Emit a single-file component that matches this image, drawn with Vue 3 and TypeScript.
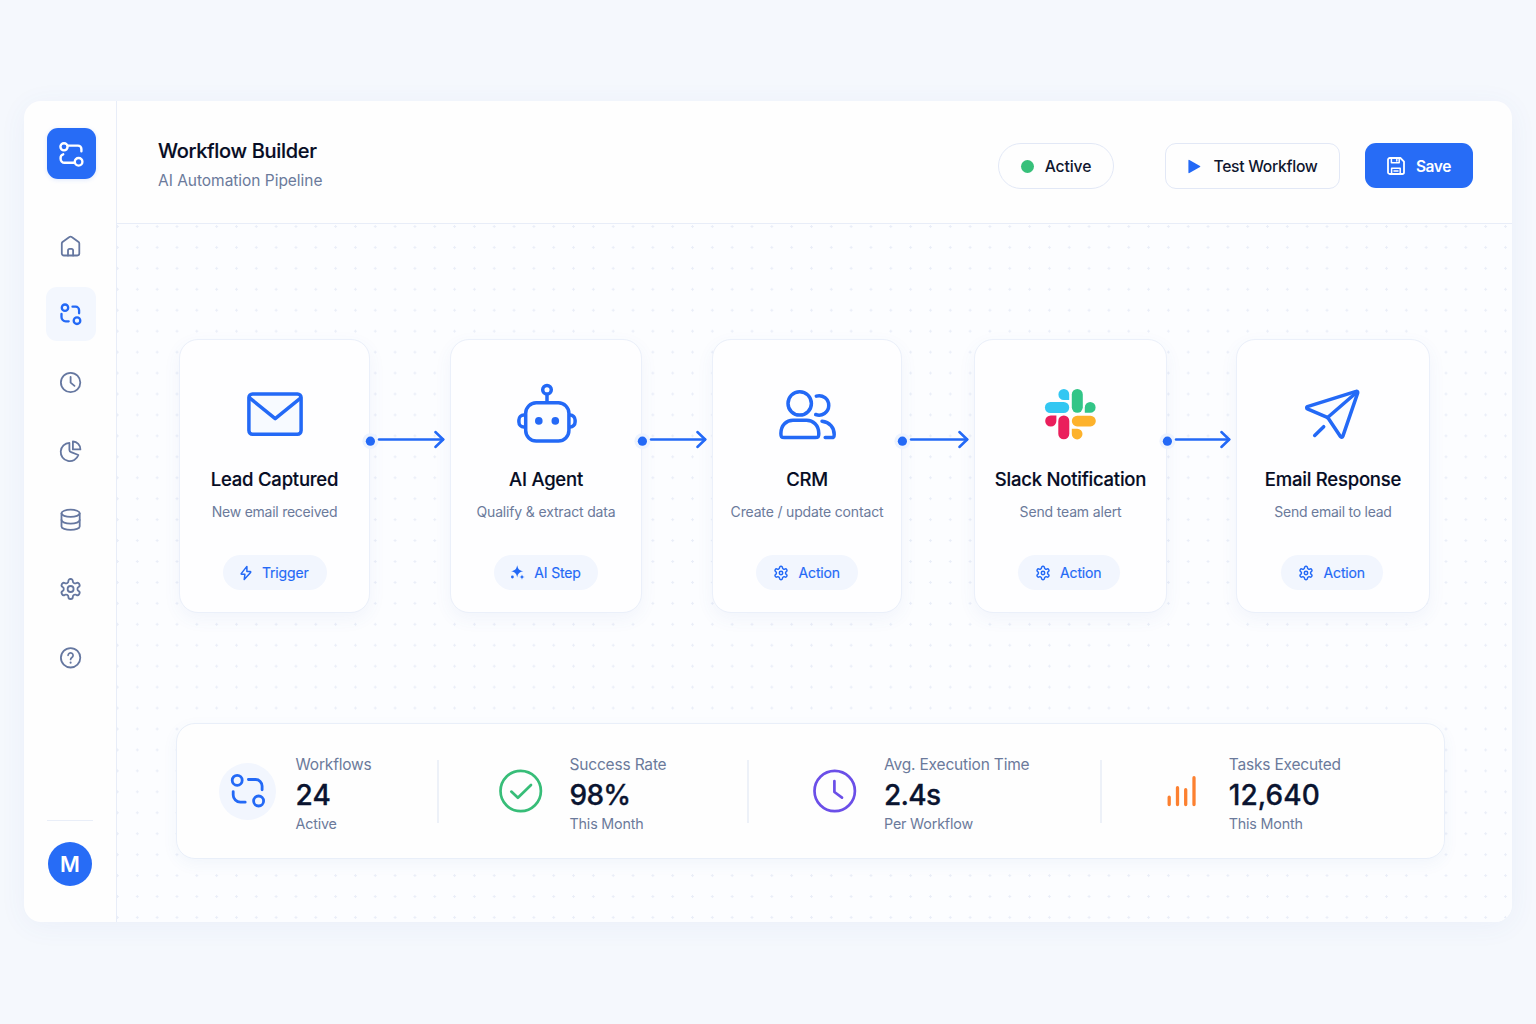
<script setup lang="ts">
type IconName = 'mail' | 'robot' | 'users' | 'slack' | 'plane'
type TagKind = 'trigger' | 'ai' | 'action'

interface Step {
  id: string
  icon: IconName
  title: string
  text: string
  tag: string
  kind: TagKind
  /** width of the connector that leaves the card; 0 for the last card */
  link: number
}

interface Stat {
  id: string
  label: string
  value: string
  note: string
}

const navItems = ['home', 'flows', 'history', 'reports', 'data', 'settings', 'help'] as const
const activeNav = 'flows'

const steps: Step[] = [
  { id: 'lead', icon: 'mail', title: 'Lead Captured', text: 'New email received', tag: 'Trigger', kind: 'trigger', link: 80 },
  { id: 'agent', icon: 'robot', title: 'AI Agent', text: 'Qualify & extract data', tag: 'AI Step', kind: 'ai', link: 70 },
  { id: 'crm', icon: 'users', title: 'CRM', text: 'Create / update contact', tag: 'Action', kind: 'action', link: 72 },
  { id: 'slack', icon: 'slack', title: 'Slack Notification', text: 'Send team alert', tag: 'Action', kind: 'action', link: 69 },
  { id: 'email', icon: 'plane', title: 'Email Response', text: 'Send email to lead', tag: 'Action', kind: 'action', link: 0 },
]

const stats: Stat[] = [
  { id: 'workflows', label: 'Workflows', value: '24', note: 'Active' },
  { id: 'success', label: 'Success Rate', value: '98%', note: 'This Month' },
  { id: 'time', label: 'Avg. Execution Time', value: '2.4s', note: 'Per Workflow' },
  { id: 'tasks', label: 'Tasks Executed', value: '12,640', note: 'This Month' },
]

const gear =
  'M12.22 2h-.44a2 2 0 0 0-2 2v.18a2 2 0 0 1-1 1.73l-.43.25a2 2 0 0 1-2 0l-.15-.08a2 2 0 0 0-2.73.73l-.22.38a2 2 0 0 0 .73 2.73l.15.1a2 2 0 0 1 1 1.72v.51a2 2 0 0 1-1 1.74l-.15.09a2 2 0 0 0-.73 2.73l.22.38a2 2 0 0 0 2.73.73l.15-.08a2 2 0 0 1 2 0l.43.25a2 2 0 0 1 1 1.73V20a2 2 0 0 0 2 2h.44a2 2 0 0 0 2-2v-.18a2 2 0 0 1 1-1.73l.43-.25a2 2 0 0 1 2 0l.15.08a2 2 0 0 0 2.73-.73l.22-.39a2 2 0 0 0-.73-2.73l-.15-.08a2 2 0 0 1-1-1.74v-.5a2 2 0 0 1 1-1.74l.15-.09a2 2 0 0 0 .73-2.73l-.22-.38a2 2 0 0 0-2.73-.73l-.15.08a2 2 0 0 1-2 0l-.43-.25a2 2 0 0 1-1-1.73V4a2 2 0 0 0-2-2z'
</script>

<template>
  <div class="page">
    <div class="app">
      <aside class="sidebar">
        <div class="logo">
          <svg width="28" height="28" viewBox="0 0 28 28" class="line" stroke-width="2.4">
            <circle cx="7" cy="6.8" r="3.6" />
            <path d="M10.8 5.6H21a3.4 3.4 0 0 1 3.4 3.4v2.3" />
            <path d="M6.2 14.3a3.6 3.6 0 0 0-2.6 3.5v.9a4 4 0 0 0 4 4h9.8" />
            <circle cx="21.6" cy="21.8" r="3.8" />
          </svg>
        </div>

        <nav class="nav">
          <a v-for="item in navItems" :key="item" class="nav-item" :class="{ active: item === activeNav }">
            <svg width="24" height="24" viewBox="0 0 24 24" class="line" :stroke-width="item === activeNav ? 2.3 : 1.8">
              <template v-if="item === 'home'">
                <path d="M2.800 9.500c0-.6.3-1.100.7-1.500l6.900-5a1.900 1.900 0 0 1 2.300 0l6.900 5c.5.4.7.9.7 1.500v10a2 2 0 0 1-2 2H4.800a2 2 0 0 1-2-2z" />
                <path d="M9 21.500v-5a1.600 1.600 0 0 1 1.600-1.600h1.900a1.600 1.600 0 0 1 1.600 1.600v5" />
              </template>
              <template v-else-if="item === 'flows'">
                <circle cx="6" cy="5.700" r="3.200" />
                <path d="M13.500 4.700h3.100a3.500 3.500 0 0 1 3.500 3.500v3.100" />
                <path d="M2.500 11.900V15a4.200 4.200 0 0 0 4.200 4.300h3" />
                <circle cx="18" cy="18.700" r="3.300" />
              </template>
              <template v-else-if="item === 'history'">
                <circle cx="11.600" cy="11.500" r="9.700" />
                <path d="M11.600 5.900v5.700l3.900 3.300" />
              </template>
              <g v-else-if="item === 'reports'" transform="translate(-.2 -.8)">
                <path d="M14.100 2.300v7.900h7.500a7.800 7.800 0 0 0-7.500-7.900z" />
                <path d="M10.600 3.700a9.100 9.100 0 1 0 9 12.100l-7.300-2.900a2.400 2.400 0 0 1-1.700-2.200z" />
              </g>
              <template v-else-if="item === 'data'">
                <ellipse cx="11.600" cy="5.300" rx="9.100" ry="3.600" />
                <path d="M2.500 5.300v13.100c0 2 4.100 3.500 9.100 3.500s9.100-1.500 9.100-3.500V5.300" />
                <path d="M2.500 12c0 2 4.100 3.600 9.100 3.600s9.100-1.600 9.100-3.600" />
              </template>
              <g v-else-if="item === 'settings'" transform="translate(-.4 0)">
                <path :d="gear" />
                <circle cx="12" cy="12" r="3" />
              </g>
              <template v-else>
                <circle cx="11.600" cy="11.800" r="9.700" />
                <path d="M9.100 9.300a2.500 2.500 0 1 1 3.800 2.200c-.9.600-1.300 1-1.300 2" stroke-width="1.700" />
                <path d="M11.600 16.600v.1" stroke-width="2" />
              </template>
            </svg>
          </a>
        </nav>

        <div class="account">
          <div class="avatar">M</div>
        </div>
      </aside>

      <div class="main">
        <header class="topbar">
          <div class="heading">
            <h1>Workflow Builder</h1>
            <p>AI Automation Pipeline</p>
          </div>
          <div class="actions">
            <div class="status"><i class="status-dot"></i><span>Active</span></div>
            <button class="btn test">
              <svg width="13" height="15" viewBox="0 0 13 15">
                <path d="M1.4.9 12 7a.6.6 0 0 1 0 1L1.4 14.1a.7.7 0 0 1-1-.6V1.5a.7.7 0 0 1 1-.6z" fill="#2369f6" />
              </svg>
              <span>Test Workflow</span>
            </button>
            <button class="btn save">
              <svg width="18" height="18" viewBox="0 0 18 18" class="line" stroke-width="1.8">
                <path d="M2.800 1h10.600L17 4.600v10.600a1.800 1.800 0 0 1-1.800 1.800H2.800A1.800 1.800 0 0 1 1 15.200V2.800A1.800 1.800 0 0 1 2.800 1z" />
                <path d="M4.400 1.200v4.600h7.800V1.200M4.600 16.800v-5.600h8.600v5.600M9.800 2.600v1.400M7 14h4" stroke-width="1.500" />
              </svg>
              <span>Save</span>
            </button>
          </div>
        </header>

        <section class="canvas">
          <div class="flow">
            <template v-for="step in steps" :key="step.id">
              <article class="card" :class="step.id">
                <svg class="card-icon line" width="64" height="64" viewBox="0 0 64 64" stroke-width="3.500">
                  <template v-if="step.icon === 'mail'">
                    <rect x="5.900" y="12" width="52.200" height="40.200" rx="3.600" fill="#f7faff" />
                    <path d="m7.200 16.400 25 20.200 25-20.200" />
                  </template>
                  <template v-else-if="step.icon === 'robot'">
                    <circle cx="33" cy="7.700" r="4.300" />
                    <path d="M33 12.500v7.500M11.200 33h-1.300a5 5 0 0 0-5 5v2a5 5 0 0 0 5 5h1.300M54.800 33h1.300a5 5 0 0 1 5 5v2a5 5 0 0 1-5 5h-1.300" />
                    <rect x="11.700" y="20.800" width="43.200" height="38.300" rx="10.500" fill="#fbfdff" />
                    <circle cx="24.800" cy="38.900" r="3.800" class="solid" />
                    <circle cx="41.300" cy="38.900" r="3.800" class="solid" />
                  </template>
                  <template v-else-if="step.icon === 'users'">
                    <circle cx="24.700" cy="21.400" r="11.700" />
                    <path d="M5.900 51.500C5.900 43 11.400 38.200 18 38.200h13.500c6.600 0 12.300 4.800 12.300 13.300 0 3.600-.6 4.100-3.400 4.100H9.300c-2.800 0-3.400-.5-3.400-4.100z" />
                    <path d="M41.300 14.100a9.700 9.700 0 1 1-.6 18.400" />
                    <path d="M47 39.200c7.800.9 12.200 6.400 12.200 13.200 0 2.400-.5 3.200-2.600 3.200h-6.400" />
                  </template>
                  <g v-else-if="step.icon === 'slack'" stroke="none" transform="translate(-.6 0)">
                    <g fill="#33c7f2">
                      <rect x="6.500" y="20" width="24.300" height="11" rx="5.500" />
                      <path d="M25.500 7a5.300 5.300 0 0 1 5.300 5.300V18h-5.300a5.500 5.500 0 0 1 0-11z" />
                    </g>
                    <g fill="#32c587">
                      <rect x="33.400" y="7" width="11" height="23.800" rx="5.500" />
                      <path d="M46.400 30.800v-5.400a5.400 5.400 0 1 1 5.400 5.400z" />
                    </g>
                    <g fill="#ea1f5c">
                      <path d="M18 33.400V39a5.600 5.600 0 1 1-5.600-5.600z" />
                      <rect x="19.900" y="33.400" width="11" height="23.900" rx="5.500" />
                    </g>
                    <g fill="#fdb22c">
                      <rect x="33.400" y="33.700" width="24" height="10.700" rx="5.350" />
                      <path d="M33.400 46.700h5.400a5.350 5.350 0 1 1-5.400 5.300z" />
                    </g>
                  </g>
                  <g v-else transform="translate(-.2 0)">
                    <path d="M6.600 24.700a1.200 1.200 0 0 0 0 2.200l19.300 8.300c.9.400 1.400.8 1.900 1.500l12 18a1.200 1.200 0 0 0 2.200-.3L56.900 10.900a1.200 1.200 0 0 0-1.600-1.500z" fill="#fbfdff" />
                    <path d="M56 10.200 26.800 35.500M13.900 53.500l9-8.800" />
                  </g>
                </svg>
                <h2>{{ step.title }}</h2>
                <p>{{ step.text }}</p>
                <div class="tag" :class="step.kind">
                  <svg v-if="step.kind === 'trigger'" width="12" height="16" viewBox="0 0 12 16" class="line" stroke-width="1.500">
                    <path d="M6.900 1.400 1.200 8.600c-.2.300 0 .7.300.7h3.400l-.7 5.200 6.400-7.100c.3-.3.100-.8-.3-.8H6.900z" />
                  </svg>
                  <svg v-else-if="step.kind === 'ai'" width="15" height="15" viewBox="0 0 15 15" fill="currentColor">
                    <path d="M7.200.3C8 4.200 9.200 5.400 13.400 6.300 9.200 7.200 8 8.400 7.200 12.400 6.400 8.400 5.200 7.200 1 6.300 5.200 5.400 6.400 4.200 7.200.3z" />
                    <path d="M12 9.500c.4 1.700.9 2.200 2.700 2.600-1.800.4-2.300.9-2.700 2.700-.4-1.800-.9-2.300-2.700-2.700 1.800-.4 2.300-.9 2.700-2.600z" />
                    <circle cx="2.400" cy="12" r="1.400" />
                  </svg>
                  <svg v-else width="16" height="16" viewBox="0 0 24 24" class="line" stroke-width="2.200">
                    <path :d="gear" />
                    <circle cx="12" cy="12" r="2.600" />
                  </svg>
                  <span>{{ step.tag }}</span>
                </div>
              </article>
              <svg v-if="step.link" class="link line" :width="step.link" height="24" :viewBox="`0 0 ${step.link} 24`">
                <circle cx=".4" cy="14.200" r="8" fill="#edf3fe" stroke="none" />
                <circle cx=".4" cy="14.200" r="4.600" fill="#2369f6" stroke="none" />
                <path :d="`M9 12.500H${step.link - 6.800}`" stroke-width="2.400" />
                <path :d="`M${step.link - 14.600} 5l7.800 7.500-7.800 7.500`" stroke-width="2.500" />
              </svg>
            </template>
          </div>

          <div class="stats">
            <div v-for="stat in stats" :key="stat.id" class="stat" :class="stat.id">
              <div class="stat-icon">
                <svg v-if="stat.id === 'workflows'" width="40" height="40" viewBox="0 0 40 40" class="line" stroke-width="2.800">
                  <circle cx="9.200" cy="9.300" r="5" />
                  <path d="M20.400 8.500h7.200a6.500 6.500 0 0 1 6.500 6.500v3.800" />
                  <path d="M5.200 20.600V24a7.200 7.200 0 0 0 7.200 7.200h4.800" />
                  <circle cx="30.600" cy="30" r="5" />
                </svg>
                <svg v-else-if="stat.id === 'success'" width="44" height="44" viewBox="0 0 44 44" class="line" stroke-width="2.700">
                  <circle cx="21.700" cy="22" r="20.200" />
                  <path d="m12.300 22.600 6.600 6.200L32 16" />
                </svg>
                <svg v-else-if="stat.id === 'time'" width="44" height="44" viewBox="0 0 44 44" class="line" stroke-width="2.700">
                  <circle cx="21.700" cy="22" r="20.200" />
                  <path d="M21.400 12v11l7.600 5.600" />
                </svg>
                <svg v-else width="32" height="34" viewBox="0 0 32 34" class="line" stroke-width="3.300">
                  <path d="M3.200 23.200v7.400M11.500 13.700v16.900M19.700 15.700v14.900M28 3.700v26.900" />
                </svg>
              </div>
              <div class="stat-text">
                <span class="label">{{ stat.label }}</span>
                <strong>{{ stat.value }}</strong>
                <span class="note">{{ stat.note }}</span>
              </div>
            </div>
          </div>
        </section>
      </div>
    </div>
  </div>
</template>

<style>
body {
  background: #f5f8fd;
}
</style>

<style scoped>
.page {
  box-sizing: border-box;
  width: 1536px;
  height: 1024px;
  padding: 101px 24px 102px;
  background: #f5f8fd;
  font-family: Inter, 'Liberation Sans', sans-serif;
  color: #0a1029;
  overflow: hidden;
}

.app {
  display: flex;
  height: 821px;
  border-radius: 17px;
  background: #fefefe;
  overflow: hidden;
  box-shadow: 0 4px 28px rgba(60, 105, 190, 0.06);
}

.line {
  fill: none;
  stroke: currentColor;
  stroke-linecap: round;
  stroke-linejoin: round;
}

.solid {
  fill: currentColor;
  stroke: none;
}

.sidebar {
  box-sizing: border-box;
  width: 93px;
  flex: none;
  display: flex;
  flex-direction: column;
  align-items: center;
  padding: 27px 0 36px;
  border-right: 1px solid #e8edf8;
}

.logo {
  width: 49px;
  height: 51px;
  margin-left: 2px;
  border-radius: 11px;
  background: #276cf6;
  color: #fff;
  display: flex;
  align-items: center;
  justify-content: center;
  box-shadow: 0 1px 4px rgba(39, 108, 246, 0.15);
}

.nav {
  display: flex;
  flex-direction: column;
  gap: 14.700px;
  margin-top: 39.600px;
}

.nav-item {
  box-sizing: border-box;
  width: 50px;
  height: 54px;
  margin-left: 1px;
  border-radius: 11px;
  color: #6577a0;
  display: flex;
  align-items: center;
  justify-content: center;
}

.nav-item.active {
  background: #f3f7fe;
  color: #2369f6;
}

.account {
  margin-top: auto;
  padding-top: 21px;
  width: 46px;
  border-top: 1px solid #e9eef8;
  display: flex;
  justify-content: center;
}

.avatar {
  width: 44px;
  height: 44px;
  border-radius: 50%;
  background: #276cf6;
  color: #fff;
  font-size: 21.500px;
  font-weight: 600;
  line-height: 44px;
  text-align: center;
}

.main {
  flex: 1;
  display: flex;
  flex-direction: column;
}

.topbar {
  box-sizing: border-box;
  height: 123px;
  padding: 0 39px 0 41px;
  display: flex;
  justify-content: space-between;
  border-bottom: 1px solid #e8edf8;
}

.heading {
  padding-top: 36px;
}

h1 {
  margin: 0;
  font-size: 20px;
  line-height: 28px;
  font-weight: 500;
  letter-spacing: -0.320px;
  color: #060c24;
  -webkit-text-stroke: 0.150px #060c24;
}

.heading p {
  margin: 5px 0 0;
  font-size: 15.500px;
  line-height: 22px;
  letter-spacing: -0.030px;
  color: #6b7a9b;
}

.actions {
  display: flex;
  align-items: flex-start;
  padding-top: 42px;
}

.status,
.btn {
  box-sizing: border-box;
  height: 46px;
  display: flex;
  align-items: center;
  justify-content: center;
  border: 1px solid #e2e8f6;
  background: #fefefe;
  font-family: inherit;
  font-size: 15.700px;
  font-weight: 500;
  color: #10172f;
}

.status {
  width: 116px;
  padding: 1px 0 0;
  border-radius: 23px;
  gap: 11px;
  letter-spacing: -0.100px;
}

.status-dot {
  width: 13px;
  height: 13px;
  border-radius: 50%;
  background: #37c07a;
}

.btn {
  padding: 1px 0 0;
  border-radius: 11px;
}

.test {
  width: 175px;
  margin-left: 51px;
  padding-left: 1px;
  gap: 12px;
  letter-spacing: -0.280px;
}

.save {
  width: 108px;
  height: 45px;
  margin-left: 25px;
  gap: 11px;
  border: 0;
  background: #276cf6;
  color: #fff;
  font-size: 15.500px;
  font-weight: 600;
  letter-spacing: -0.400px;
}

.canvas {
  flex: 1;
  background-color: #fcfdff;
  background-image: radial-gradient(circle at 1.500px 1.500px, #eaeef8 1px, transparent 1.400px);
  background-size: 19.830px 20.950px;
  background-position: -1px 1px;
}

.flow {
  display: grid;
  grid-template-columns: 191px 80px 192px 70px 190px 72px 193px 69px 194px;
  margin: 115px 0 0 62px;
}

.card {
  box-sizing: border-box;
  height: 274px;
  padding-top: 42px;
  border: 1.500px solid #ebf0fa;
  border-radius: 19px;
  background: #fefeff;
  box-shadow: 0 6px 18px rgba(60, 105, 190, 0.060);
  display: flex;
  flex-direction: column;
  align-items: center;
}

.card-icon {
  flex: none;
  color: #2369f6;
}

.card h2 {
  margin: 21px 0 0;
  font-size: 18.500px;
  line-height: 24px;
  font-weight: 500;
  letter-spacing: -0.230px;
  color: #060c24;
  -webkit-text-stroke: 0.150px #060c24;
  white-space: nowrap;
}

.card p {
  margin: 11px 0 0;
  font-size: 14px;
  line-height: 20px;
  letter-spacing: -0.160px;
  color: #6b7a9b;
  white-space: nowrap;
}

.card.lead p,
.card.email p {
  letter-spacing: -0.250px;
}

.tag {
  width: 102px;
  height: 35px;
  margin-top: 33px;
  border-radius: 18px;
  background: #f2f6fe;
  color: #2369f6;
  font-size: 14px;
  font-weight: 400;
  letter-spacing: -0.150px;
  -webkit-text-stroke: 0.150px #2369f6;
  display: flex;
  align-items: center;
  justify-content: center;
  gap: 9.500px;
}

.tag.action {
  box-sizing: border-box;
  padding-right: 1px;
}

.tag.trigger,
.tag.ai {
  box-sizing: border-box;
  width: 104px;
  padding-right: 1.500px;
}

.tag.trigger {
  padding-right: 0;
}

.card.slack .tag {
  margin-right: 4px;
}

.card.email .tag {
  margin-right: 2px;
}

.link {
  margin-top: 88px;
  overflow: visible;
  position: relative;
  color: #2369f6;
}

.stats {
  box-sizing: border-box;
  width: 1269px;
  height: 136px;
  margin: 110px 0 0 59px;
  border: 1.500px solid #e9eff9;
  border-radius: 19px;
  background: #fefefe;
  box-shadow: 0 5px 16px rgba(60, 105, 190, 0.055);
  display: grid;
  grid-template-columns: 262px 310px 353px 1fr;
  align-items: center;
}

.stat {
  height: 63px;
  display: flex;
  align-items: center;
  border-right: 2px solid #edf1f8;
}

.stat:last-child {
  border-right: 0;
}

.stat-icon {
  width: 57px;
  height: 57px;
  border-radius: 50%;
  flex: none;
  display: flex;
  align-items: center;
  justify-content: center;
}

.workflows { padding-left: 42px; gap: 19.500px; }
.success { padding-left: 53px; gap: 20.500px; }
.time { padding-left: 57px; gap: 21px; }
.tasks { padding-left: 51px; gap: 18.700px; }

.workflows .stat-icon { background: #f2f6fe; color: #2369f6; }
.success .stat-icon { color: #37bd78; }
.time .stat-icon { color: #6b4fe8; }
.tasks .stat-icon { color: #fc8030; }

.stat-text {
  display: flex;
  flex-direction: column;
  padding-top: 6px;
  color: #6b7a9b;
}

.label {
  font-size: 15.500px;
  line-height: 22px;
  letter-spacing: -0.180px;
}

.stat-text strong {
  font-size: 28px;
  line-height: 34px;
  margin: 2px 0 2px;
  font-weight: 500;
  letter-spacing: 0.080px;
  color: #0a1430;
  -webkit-text-stroke: 0.300px #0a1430;
}

.success strong,
.time strong {
  letter-spacing: -0.700px;
}

.note {
  font-size: 14.300px;
  line-height: 20px;
  letter-spacing: -0.170px;
}
</style>
